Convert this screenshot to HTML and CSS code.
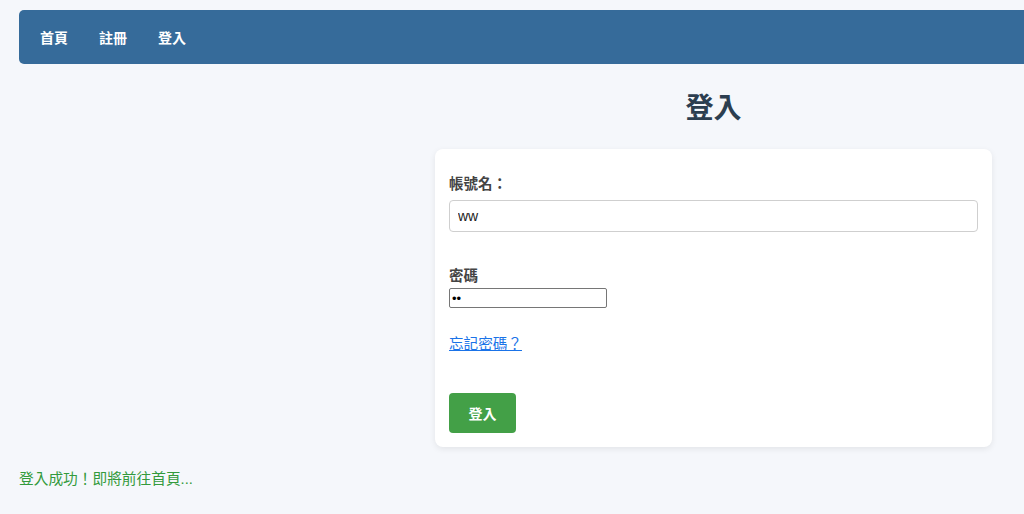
FILE: index.html
```html
<!DOCTYPE html>
<html lang="zh-Hant">
<head>
<meta charset="utf-8">
<title>登入</title>
<link rel="stylesheet" href="styles.css">
</head>
<body>
<nav class="navbar">
  <a href="#" class="nav-link">首頁</a>
  <a href="#" class="nav-link">註冊</a>
  <a href="#" class="nav-link">登入</a>
</nav>
<main class="main">
  <section class="login">
    <h1 class="title">登入</h1>
    <form class="card">
      <div class="group">
        <label class="label label-block">帳號名：</label>
        <input class="text-input" type="text" value="ww">
      </div>
      <div class="group group-pw">
        <label class="label label-block label-pw">密碼</label>
        <input class="pw-input" type="password" value="ww">
      </div>
      <div class="group group-link">
        <a href="#" class="forgot">忘記密碼？</a>
      </div>
      <button type="button" class="btn">登入</button>
    </form>
  </section>
</main>
<p class="success">登入成功！即將前往首頁...</p>
</body>
</html>
```

FILE: styles.css
```css
html, body {
  overflow: hidden;
}
body {
  margin: 0;
  padding: 10px 0 0 19px;
  background: #f5f7fb;
  font-family: "Liberation Sans", "Noto Sans CJK TC", sans-serif;
  font-size: 14px;
  color: #333;
}
.navbar {
  display: flex;
  align-items: center;
  gap: 31px;
  height: 54px;
  padding: 0 21px;
  margin-right: -20px;
  background: #366b9a;
  border-radius: 5px 0 0 5px;
  box-sizing: border-box;
}
.nav-link {
  color: #fff;
  font-weight: bold;
  font-size: 14px;
  text-decoration: none;
}
.main {
  display: flex;
  justify-content: flex-end;
  padding-right: 32px;
}
.login {
  width: 557px;
}
.title {
  margin: 27px 0 22px;
  text-align: center;
  font-size: 28px;
  line-height: 36px;
  color: #2c3e50;
  font-weight: bold;
}
.card {
  background: #fff;
  border-radius: 8px;
  box-shadow: 0 2px 6px rgba(0, 0, 0, 0.08);
  padding: 25px 14px 14px;
}
.label {
  font-weight: bold;
  font-size: 14.5px;
  color: #444;
  line-height: 20px;
}
.label-block {
  display: block;
  margin-bottom: 6px;
}
.label-pw {
  margin-bottom: 2px;
}
.text-input {
  display: block;
  width: 100%;
  box-sizing: border-box;
  height: 32px;
  padding: 0 8px;
  border: 1px solid #cfcfcf;
  border-radius: 4px;
  font-family: "Liberation Sans", sans-serif;
  font-size: 14px;
  color: #222;
}
.group-pw {
  margin-top: 34px;
}
.pw-input {
  display: block;
  width: 158px;
  height: 20px;
  box-sizing: border-box;
  padding: 1px 2px;
  border: 1px solid #767676;
  border-radius: 2px;
  font-size: 13px;
}
.group-link {
  margin-top: 26px;
  line-height: 20px;
}
.forgot {
  color: #1a73e8;
  text-decoration: underline;
  font-size: 14.6px;
}
.btn {
  display: block;
  margin-top: 39px;
  width: 67px;
  height: 40px;
  border: none;
  border-radius: 4px;
  background: #43a047;
  color: #fff;
  font-family: "Liberation Sans", "Noto Sans CJK TC", sans-serif;
  font-size: 14px;
  font-weight: bold;
}
.success {
  margin: 22px 0 0;
  color: #339a3c;
  font-size: 14.7px;
  line-height: 20px;
}
```
